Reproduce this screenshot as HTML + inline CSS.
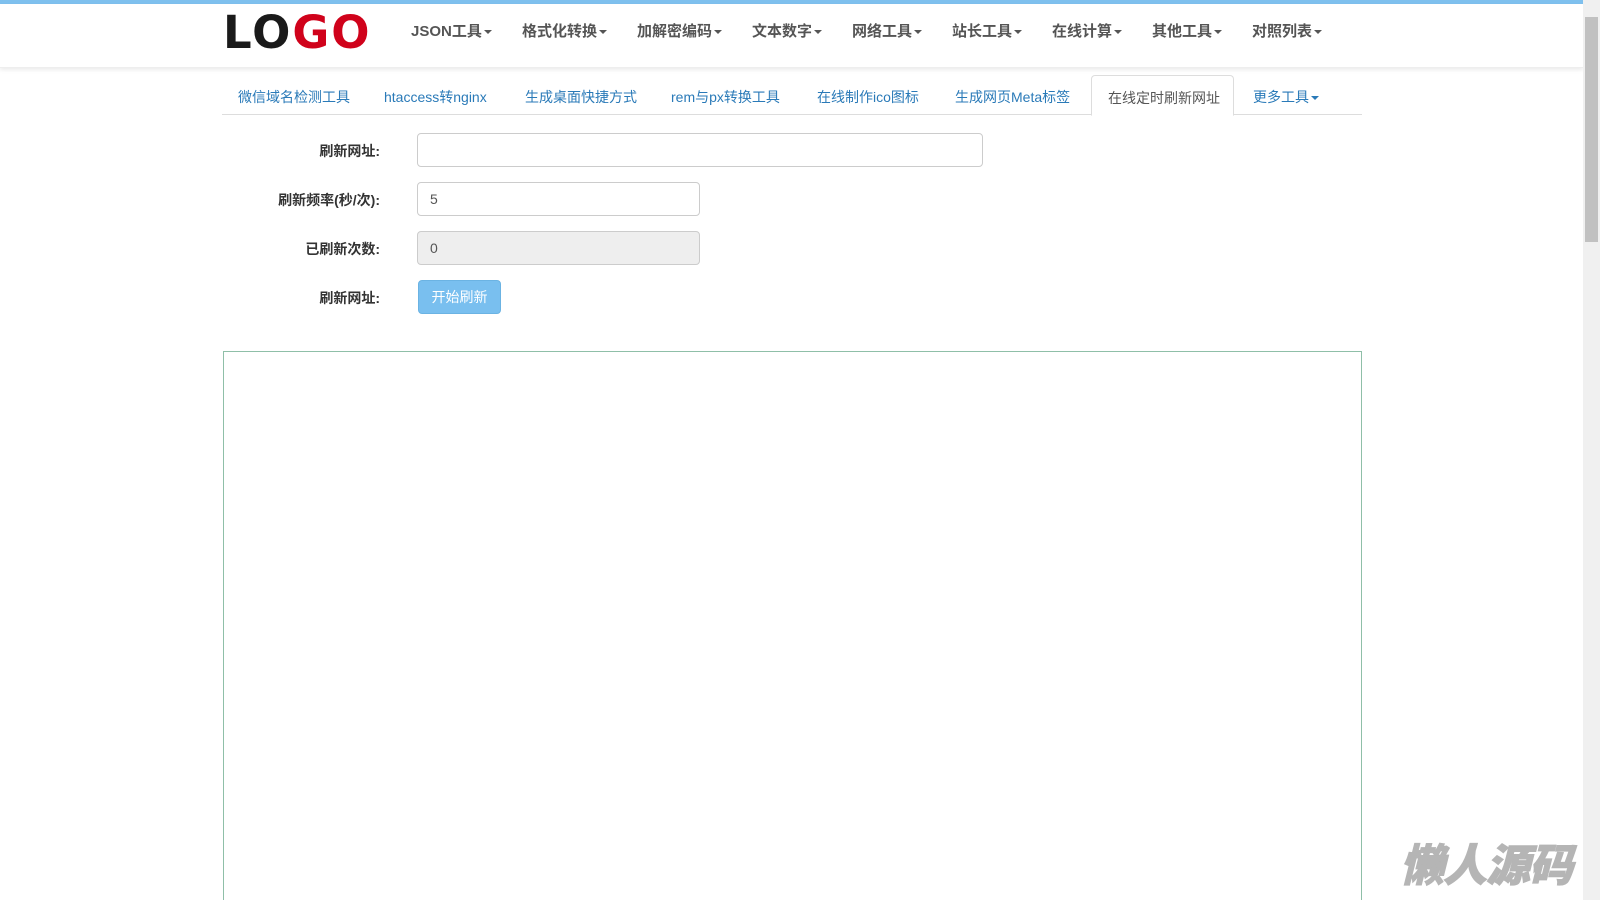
<!DOCTYPE html>
<html><head><meta charset="utf-8"><style>
*{margin:0;padding:0;box-sizing:border-box}
html,body{width:1600px;height:900px;overflow:hidden;background:#fff;font-family:"Liberation Sans","Noto Sans CJK SC",sans-serif;position:relative}
.top{position:absolute;left:0;top:0;width:1583px;height:4px;background:#7ec0ee}
.hdr{position:absolute;left:0;top:4px;width:1583px;height:64px;background:#fff;box-shadow:0 2px 4px rgba(0,0,0,.08);border-bottom:1px solid #eee}
.logo{position:absolute;left:223px;top:10px;font:900 45px/1 "DejaVu Sans","Liberation Sans",sans-serif;letter-spacing:2px;color:#1a1a1a}
.logo span{color:#d0021b}
.nav{position:absolute;top:20px;font-size:15px;font-weight:bold;color:#555;white-space:nowrap}
.car{display:inline-block;width:0;height:0;border-left:4px solid transparent;border-right:4px solid transparent;border-top:4px solid #555;vertical-align:middle;margin-left:2px}
.tabs{position:absolute;left:222px;top:75px;width:1140px;height:40px;border-bottom:1px solid #ddd}
.tab{position:absolute;top:12px;font-size:14px;color:#2a7ab8;white-space:nowrap}
.act{position:absolute;left:869px;top:0;width:143px;height:41px;border:1px solid #ddd;border-bottom-color:#fff;border-radius:4px 4px 0 0;background:#fff;color:#555;font-size:14px;padding:12px 0 0 16px}
.lab{position:absolute;right:1220px;font-size:14px;font-weight:bold;color:#333;white-space:nowrap}
.inp{position:absolute;left:417px;height:34px;border:1px solid #ccc;border-radius:4px;background:#fff;font-size:14px;color:#555;padding:8px 12px}
.btn{position:absolute;left:418px;top:280px;width:83px;height:34px;background:#79bfef;border:1px solid #6bb3e3;border-radius:4px;color:#fff;font-size:14px;text-align:center;line-height:32px}
.frame{position:absolute;left:223px;top:351px;width:1139px;height:549px;border:1px solid #8fbfa8;border-bottom:none}
.sb{position:absolute;left:1583px;top:0;width:17px;height:900px;background:#f0f0f0}
.th{position:absolute;left:2px;top:17px;width:13px;height:225px;background:#c1c1c1}
.wm{position:absolute;left:1400px;top:840px;font:italic 900 44px/1 "Noto Sans CJK SC",sans-serif;color:#b5b5b5;letter-spacing:-1px;-webkit-text-stroke:1px #b5b5b5}
</style></head><body>
<div class="top"></div>
<div class="hdr"></div>
<div class="logo">LO<span>GO</span></div>
<div class="nav" style="left:411px">JSON工具<i class="car"></i></div>
<div class="nav" style="left:522px">格式化转换<i class="car"></i></div>
<div class="nav" style="left:637px">加解密编码<i class="car"></i></div>
<div class="nav" style="left:752px">文本数字<i class="car"></i></div>
<div class="nav" style="left:852px">网络工具<i class="car"></i></div>
<div class="nav" style="left:952px">站长工具<i class="car"></i></div>
<div class="nav" style="left:1052px">在线计算<i class="car"></i></div>
<div class="nav" style="left:1152px">其他工具<i class="car"></i></div>
<div class="nav" style="left:1252px">对照列表<i class="car"></i></div>
<div class="tabs">
<div class="tab" style="left:16px">微信域名检测工具</div>
<div class="tab" style="left:162px">htaccess转nginx</div>
<div class="tab" style="left:303px">生成桌面快捷方式</div>
<div class="tab" style="left:449px">rem与px转换工具</div>
<div class="tab" style="left:595px">在线制作ico图标</div>
<div class="tab" style="left:733px">生成网页Meta标签</div>
<div class="act">在线定时刷新网址</div>
<div class="tab" style="left:1031px">更多工具<i class="car" style="border-top-color:#2a7ab8"></i></div>
</div>
<div class="lab" style="top:141px">刷新网址:</div>
<div class="inp" style="top:133px;width:566px"></div>
<div class="lab" style="top:190px">刷新频率(秒/次):</div>
<div class="inp" style="top:182px;width:283px">5</div>
<div class="lab" style="top:239px">已刷新次数:</div>
<div class="inp" style="top:231px;width:283px;background:#eee">0</div>
<div class="lab" style="top:288px">刷新网址:</div>
<div class="btn">开始刷新</div>
<div class="frame"></div>
<div class="wm">懒人源码</div>
<div class="sb"><div class="th"></div></div>
</body></html>
